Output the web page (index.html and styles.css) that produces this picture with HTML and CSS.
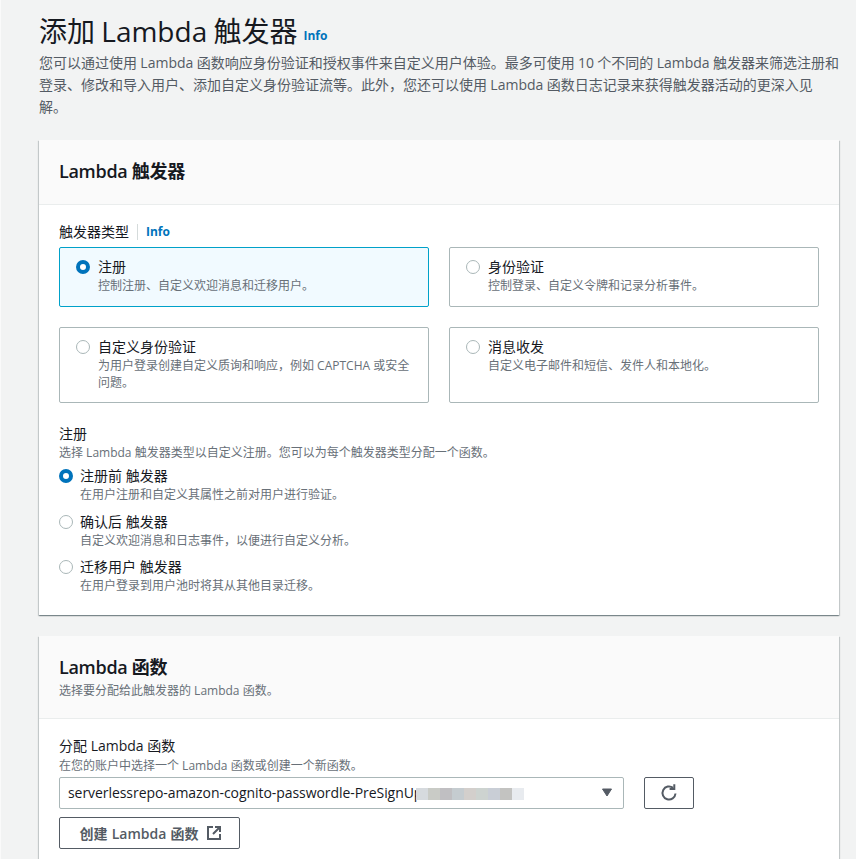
FILE: index.html
```html
<!DOCTYPE html>
<html lang="zh">
<head>
<meta charset="utf-8">
<title>添加 Lambda 触发器</title>
<link rel="stylesheet" href="styles.css">
</head>
<body>
<main class="page">
  <header class="page-head">
    <div class="title-row"><h1>添加 Lambda 触发器</h1><a class="info info-title">Info</a></div>
    <p class="lede">您可以通过使用 Lambda 函数响应身份验证和授权事件来自定义用户体验。最多可使用 10 个不同的 Lambda 触发器来筛选注册和登录、修改和导入用户、添加自定义身份验证流等。此外，您还可以使用 Lambda 函数日志记录来获得触发器活动的更深入见<br>解。</p>
  </header>

  <section class="card">
    <div class="card-head"><h2>Lambda 触发器</h2></div>
    <div class="card-body body-triggers">
      <div class="label-row"><span class="label">触发器类型</span><a class="info info-label">Info</a></div>
      <div class="tiles">
        <div class="tile tile-on">
          <span class="radio radio-on"></span>
          <div><div class="opt-title">注册</div><div class="opt-desc">控制注册、自定义欢迎消息和迁移用户。</div></div>
        </div>
        <div class="tile">
          <span class="radio"></span>
          <div><div class="opt-title">身份验证</div><div class="opt-desc">控制登录、自定义令牌和记录分析事件。</div></div>
        </div>
        <div class="tile">
          <span class="radio"></span>
          <div><div class="opt-title">自定义身份验证</div><div class="opt-desc">为用户登录创建自定义质询和响应，例如 CAPTCHA 或安全问题。</div></div>
        </div>
        <div class="tile">
          <span class="radio"></span>
          <div><div class="opt-title">消息收发</div><div class="opt-desc">自定义电子邮件和短信、发件人和本地化。</div></div>
        </div>
      </div>
      <div class="group">
        <div class="label">注册</div>
        <div class="opt-desc">选择 Lambda 触发器类型以自定义注册。您可以为每个触发器类型分配一个函数。</div>
        <div class="radios">
          <div class="radio-row"><span class="radio radio-on"></span><div><div class="opt-title">注册前 触发器</div><div class="opt-desc">在用户注册和自定义其属性之前对用户进行验证。</div></div></div>
          <div class="radio-row"><span class="radio"></span><div><div class="opt-title">确认后 触发器</div><div class="opt-desc">自定义欢迎消息和日志事件，以便进行自定义分析。</div></div></div>
          <div class="radio-row"><span class="radio"></span><div><div class="opt-title">迁移用户 触发器</div><div class="opt-desc">在用户登录到用户池时将其从其他目录迁移。</div></div></div>
        </div>
      </div>
    </div>
  </section>

  <section class="card card-fn">
    <div class="card-head head-fn"><h2>Lambda 函数</h2><div class="opt-desc head-desc">选择要分配给此触发器的 Lambda 函数。</div></div>
    <div class="card-body body-fn">
      <div class="label">分配 Lambda 函数</div>
      <div class="opt-desc fn-desc">在您的账户中选择一个 Lambda 函数或创建一个新函数。</div>
      <div class="select-row">
        <div class="select">
          <span class="select-text">serverlessrepo-amazon-cognito-passwordle-PreSignUp</span>
          <span class="smudge"><i class="s1"></i><i class="s2"></i><i class="s3"></i><i class="s4"></i><i class="s5"></i><i class="s6"></i><i class="s7"></i><i class="s8"></i><i class="s9"></i></span>
          <svg class="caret" width="12" height="9" viewBox="0 0 12 9"><path d="M1.5 1h9L6 8z" fill="#545b64" stroke="#545b64" stroke-linejoin="round"/></svg>
        </div>
        <button class="btn btn-icon" type="button" aria-label="刷新">
          <svg width="18" height="18" viewBox="0 0 18 18" fill="none" stroke="#545b64" stroke-width="2"><path d="M15.5 9.5a6.5 6.5 0 1 1-2.4-5.6"/><path d="M14.3 1.2v3.7h-3.7" stroke-linecap="square"/></svg>
        </button>
      </div>
      <button class="btn btn-create" type="button">创建 Lambda 函数
        <svg width="16" height="16" viewBox="0 0 16 16" fill="none" stroke="#545b64" stroke-width="2"><path d="M7 2H2v12h12V9"/><path d="M9 2h5v5M14 2 7 9"/></svg>
      </button>
    </div>
  </section>
</main>
</body>
</html>
```

FILE: styles.css
```css
* { box-sizing: border-box; }
html, body { margin: 0; padding: 0; height: 859px; overflow: hidden; }
body {
  background: #f2f3f3;
  color: #16191f;
  font-family: "Open Sans", "Noto Sans CJK SC", sans-serif;
  font-size: 14px;
  line-height: 22px;
}
.page { padding: 0 17px 0 38px; border-left: 1px solid #fafafa; }
.title-row { display: flex; align-items: flex-end; height: 52px; padding: 10px 0 1px; }
h1 { margin: 0; font-size: 28px; font-weight: 400; line-height: 40px; height: 40px; word-spacing: -1px; }
.info { color: #0073bb; font-size: 12px; font-weight: 700; }
.info-title { margin-left: 6px; line-height: 16px; padding-bottom: 7px; }
.lede { margin: 0 -2px 0 0; color: #545b64; font-size: 14px; line-height: 22px; word-spacing: -.3px; }
.card {
  margin-top: 22px;
  background: #fff;
  box-shadow: 0 1px 1px 0 rgba(0, 28, 36, .3), 1px 1px 1px 0 rgba(0, 28, 36, .15), -1px 1px 1px 0 rgba(0, 28, 36, .15);
  width: 800px;
}
.card-fn { margin-top: 21px; }
.card-head { background: #fafafa; border-bottom: 1px solid #eaeded; height: 65px; padding: 20px 20px 0; }
.head-fn { height: 83px; }
.head-desc { margin-top: 4px; }
h2 { margin: 0; font-size: 18px; font-weight: 600; line-height: 22px; letter-spacing: -.3px; }
.card-body { padding: 0 20px; }
.body-triggers { height: 410px; padding-top: 17px; }
.label-row { display: flex; align-items: center; height: 20px; }
.label { font-size: 14px; line-height: 20px; }
.info-label { margin-left: 8px; padding-left: 8px; border-left: 1px solid #d5dbdb; line-height: 16px; }
.tiles { display: grid; grid-template-columns: 370px 370px; column-gap: 20px; row-gap: 20px; grid-template-rows: 60px 76px; margin-top: 5px; margin-bottom: 21px; }
.tile { display: flex; gap: 8px; border: 1px solid #aab7b8; border-radius: 2px; padding: 9px 16px; }
.tile-on { background: #f1faff; border-color: #00a1c9; }
.radio { flex: none; width: 14px; height: 14px; margin-top: 3px; border: 1px solid #aab7b8; border-radius: 50%; background: #fff; }
.radio-on { border: 4px solid #0073bb; }
.opt-title { font-size: 14px; line-height: 20px; }
.opt-desc { color: #687078; font-size: 12px; line-height: 17px; }
.radios { display: flex; flex-direction: column; gap: 7.6px; margin-top: 5px; }
.radio-row { display: flex; gap: 7px; height: 38px; }
.body-fn { padding: 17px 20px 40px; }
.fn-desc { margin-top: 1px; }
.select-row { display: flex; gap: 20px; margin-top: 3px; }
.select {
  position: relative;
  display: flex;
  align-items: center;
  width: 565px;
  height: 32px;
  padding: 0 8px;
  border: 1px solid #aab7b8;
  border-radius: 2px;
  background: #fff;
  color: #16191f;
  font-size: 14px;
  letter-spacing: -.06px;
}
.caret { position: absolute; right: 10px; top: 10px; }
.smudge { position: absolute; left: 356px; top: 0; display: flex; height: 26px; padding: 10px 5px 4px 0; width: 113px; background: #fff; border-radius: 12px; filter: blur(.6px); }
.smudge i { display: block; width: 12px; height: 12px; }
.s1 { background: #d6dade; } .s2 { background: #c9cbc6; } .s3 { background: #c0bfc2; } .s4 { background: #c5ccd0; }
.s5 { background: #d3cfcc; } .s6 { background: #cdd3d0; } .s7 { background: #c9ced6; } .s8 { background: #c3c3c1; } .s9 { background: #e8ebef; }
.btn {
  display: flex;
  align-items: center;
  justify-content: center;
  border: 1px solid #545b64;
  border-radius: 2px;
  background: #fff;
  color: #545b64;
  font-family: inherit;
  font-size: 14px;
  font-weight: 600;
  padding: 0;
  word-spacing: .5px;
}
.btn-icon { width: 50px; height: 32px; }
.btn-create { gap: 8px; width: 181px; height: 32px; margin-top: 8px; padding-left: 3px; }
```
